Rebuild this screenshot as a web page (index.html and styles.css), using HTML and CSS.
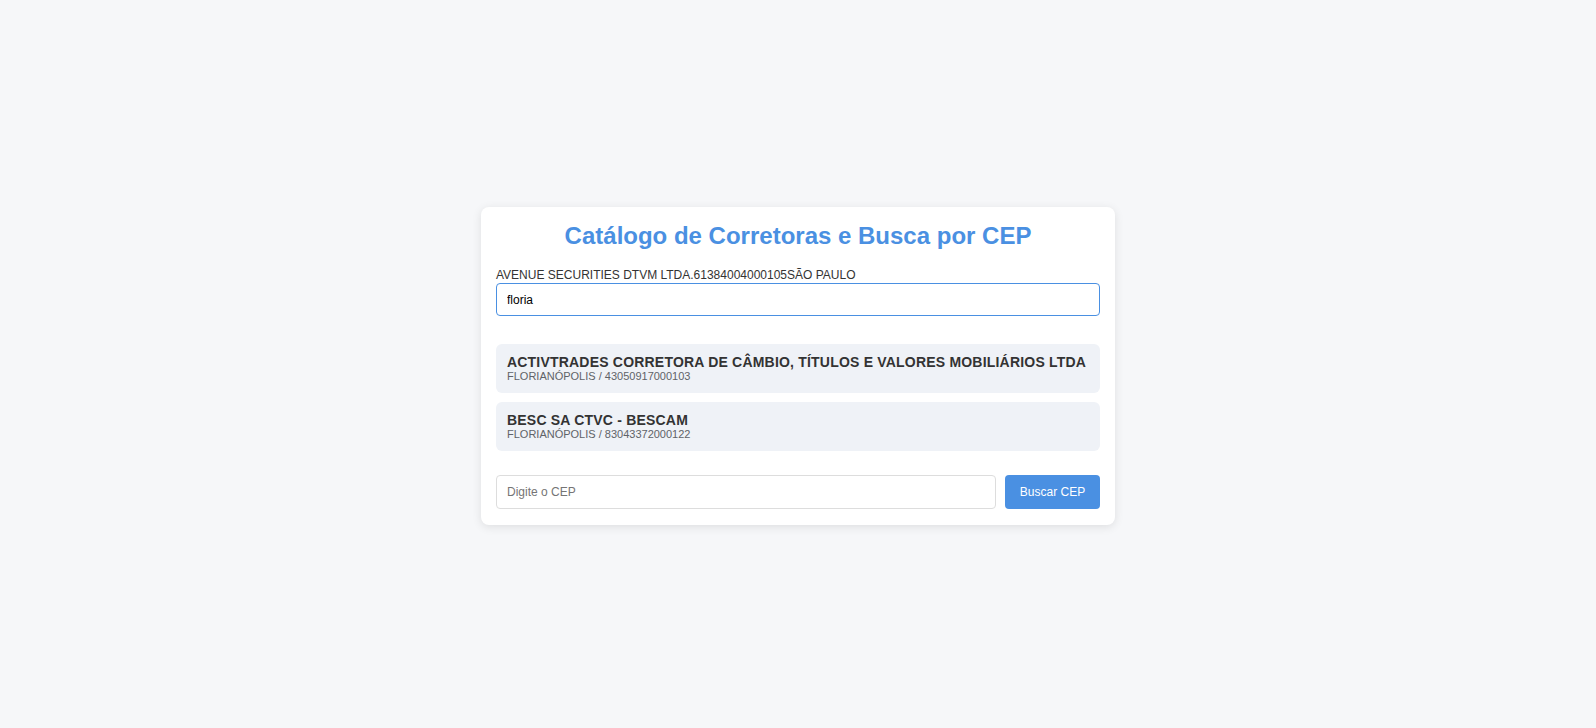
FILE: index.html
```html
<!DOCTYPE html>
<html lang="pt-BR">
<head>
<meta charset="utf-8">
<title>Catálogo de Corretoras</title>
<link rel="stylesheet" href="styles.css">
</head>
<body>
<main class="card">
  <h2 class="title">Catálogo de Corretoras e Busca por CEP</h2>
  <div class="search">
    <label class="search-label" for="q">AVENUE SECURITIES DTVM LTDA.61384004000105SÃO PAULO</label>
    <input id="q" class="search-input" type="text" value="floria">
  </div>
  <ul class="results">
    <li class="result">
      <div class="result-name">ACTIVTRADES CORRETORA DE CÂMBIO, TÍTULOS E VALORES MOBILIÁRIOS LTDA</div>
      <div class="result-meta">FLORIANÓPOLIS / 43050917000103</div>
    </li>
    <li class="result">
      <div class="result-name">BESC SA CTVC - BESCAM</div>
      <div class="result-meta">FLORIANÓPOLIS / 83043372000122</div>
    </li>
  </ul>
  <div class="cep-row">
    <input class="cep-input" type="text" placeholder="Digite o CEP">
    <button class="cep-button" type="button">Buscar CEP</button>
  </div>
</main>
</body>
</html>
```

FILE: styles.css
```css
* { box-sizing: border-box; }

html, body {
  margin: 0;
  padding: 0;
}

body {
  min-height: 100vh;
  display: flex;
  align-items: center;
  justify-content: center;
  background: #f6f7f9;
  font-family: "Liberation Sans", Arial, sans-serif;
  color: #333;
  padding-top: 4px;
}

.card {
  width: 634px;
  background: #fff;
  border-radius: 8px;
  padding: 15px 15px 16px;
  box-shadow: 0 2px 10px rgba(0, 0, 0, 0.1);
}

.title {
  margin: 0 0 18px;
  text-align: center;
  font-size: 24px;
  font-weight: bold;
  color: #4a90e2;
}

.search {
  display: flex;
  flex-direction: column;
}

.search-label {
  font-size: 12px;
  color: #333;
}

.search-input {
  height: 33px;
  margin-top: 1px;
  padding: 0 10px;
  border: 1px solid #4a90e2;
  border-radius: 4px;
  font-family: "Liberation Sans", Arial, sans-serif;
  font-size: 12px;
  color: #000;
  outline: none;
}

.results {
  list-style: none;
  margin: 28px 0 0;
  padding: 0;
  display: flex;
  flex-direction: column;
  gap: 9px;
}

.result {
  background: #eff2f7;
  border-radius: 6px;
  padding: 10px 11px;
  height: 49px;
}

.result-name {
  font-size: 14px;
  font-weight: bold;
  letter-spacing: 0.2px;
  color: #333;
}

.result-meta {
  font-size: 11px;
  color: #5f6368;
}

.cep-row {
  display: flex;
  gap: 9px;
  margin-top: 24px;
}

.cep-input {
  flex: 1;
  height: 34px;
  padding: 0 10px;
  border: 1px solid #ddd;
  border-radius: 4px;
  font-family: "Liberation Sans", Arial, sans-serif;
  font-size: 12px;
  color: #333;
  outline: none;
}

.cep-input::placeholder {
  color: #757575;
}

.cep-button {
  width: 95px;
  height: 34px;
  border: none;
  border-radius: 4px;
  background: #4a90e2;
  color: #fff;
  font-family: "Liberation Sans", Arial, sans-serif;
  font-size: 12px;
  cursor: pointer;
}
```
